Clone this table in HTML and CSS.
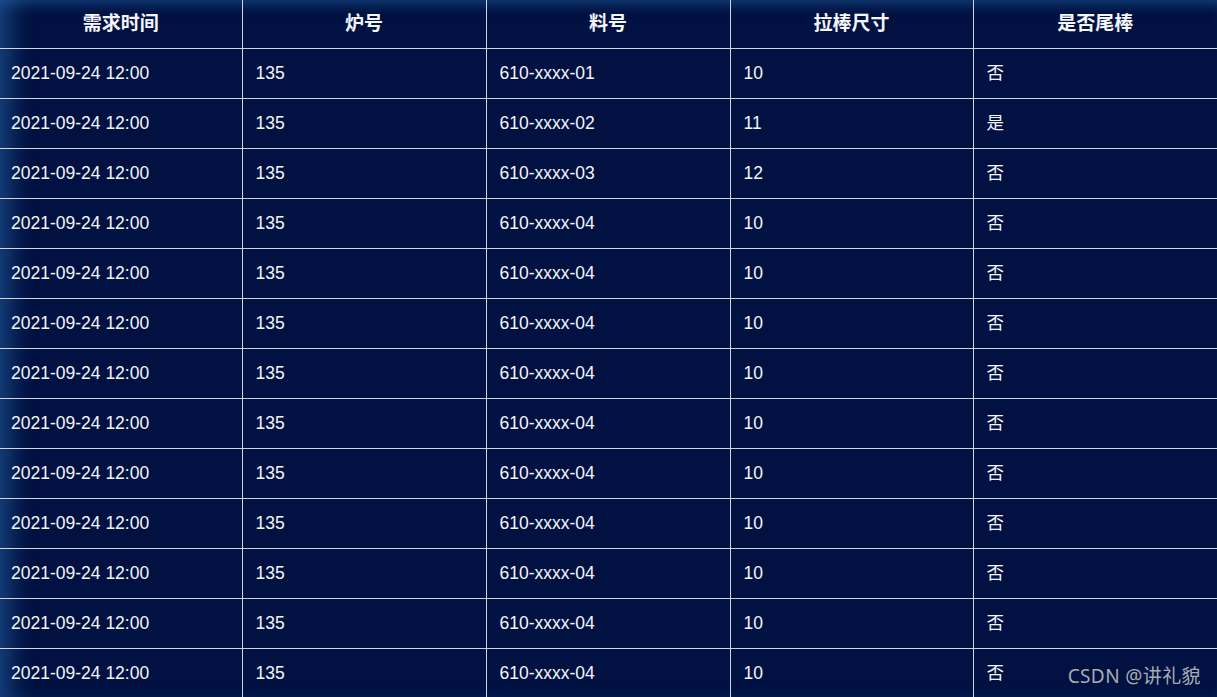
FILE: index.html
```html
<!DOCTYPE html>
<html lang="zh">
<head>
<meta charset="utf-8">
<link rel="stylesheet" href="styles.css">
</head>
<body>
<div class="screen">
  <table class="grid">
    <colgroup>
      <col class="c1"><col class="c2"><col class="c3"><col class="c4"><col class="c5">
    </colgroup>
    <thead>
      <tr><th>需求时间</th><th>炉号</th><th>料号</th><th>拉棒尺寸</th><th>是否尾棒</th></tr>
    </thead>
    <tbody>
      <tr><td>2021-09-24 12:00</td><td>135</td><td>610-xxxx-01</td><td>10</td><td>否</td></tr>
      <tr><td>2021-09-24 12:00</td><td>135</td><td>610-xxxx-02</td><td>11</td><td>是</td></tr>
      <tr><td>2021-09-24 12:00</td><td>135</td><td>610-xxxx-03</td><td>12</td><td>否</td></tr>
      <tr><td>2021-09-24 12:00</td><td>135</td><td>610-xxxx-04</td><td>10</td><td>否</td></tr>
      <tr><td>2021-09-24 12:00</td><td>135</td><td>610-xxxx-04</td><td>10</td><td>否</td></tr>
      <tr><td>2021-09-24 12:00</td><td>135</td><td>610-xxxx-04</td><td>10</td><td>否</td></tr>
      <tr><td>2021-09-24 12:00</td><td>135</td><td>610-xxxx-04</td><td>10</td><td>否</td></tr>
      <tr><td>2021-09-24 12:00</td><td>135</td><td>610-xxxx-04</td><td>10</td><td>否</td></tr>
      <tr><td>2021-09-24 12:00</td><td>135</td><td>610-xxxx-04</td><td>10</td><td>否</td></tr>
      <tr><td>2021-09-24 12:00</td><td>135</td><td>610-xxxx-04</td><td>10</td><td>否</td></tr>
      <tr><td>2021-09-24 12:00</td><td>135</td><td>610-xxxx-04</td><td>10</td><td>否</td></tr>
      <tr><td>2021-09-24 12:00</td><td>135</td><td>610-xxxx-04</td><td>10</td><td>否</td></tr>
      <tr><td>2021-09-24 12:00</td><td>135</td><td>610-xxxx-04</td><td>10</td><td>否</td></tr>
    </tbody>
  </table>
  <div class="watermark">CSDN @讲礼貌</div>
</div>
</body>
</html>
```

FILE: styles.css
```css
html, body {
  margin: 0;
  padding: 0;
  background: #001040;
}
.screen {
  position: relative;
  width: 1217px;
  height: 697px;
  overflow: hidden;
  background: #011141;
  box-shadow: inset 22px 0 22px -10px rgba(40, 110, 180, 0.5), inset 0 12px 14px -8px rgba(40, 110, 180, 0.45);
}
.grid {
  width: 1217px;
  border-collapse: collapse;
  table-layout: fixed;
  font-family: "Liberation Sans", Arial, "Noto Sans CJK SC", sans-serif;
  color: #f4f6fa;
}
.c1 { width: 242px; }
.c2 { width: 244px; }
.c3 { width: 244px; }
.c4 { width: 243px; }
.grid th {
  height: 48px;
  padding: 0 0 4px 0;
  font-size: 19px;
  font-weight: bold;
  text-align: center;
  border-right: 1px solid #d0d4dc;
  border-bottom: 1px solid #d0d4dc;
  box-sizing: border-box;
}
.grid td {
  height: 49px;
  padding: 0 0 0 13px;
  font-size: 17.5px;
  line-height: 20px;
  text-align: left;
  border-right: 1px solid #d0d4dc;
  border-bottom: 1px solid #d0d4dc;
  white-space: nowrap;
}
.grid td:first-child {
  padding-left: 11px;
}
.grid th:last-child,
.grid td:last-child {
  border-right: none;
}
.watermark {
  position: absolute;
  right: 16px;
  bottom: 8px;
  font-family: "Noto Sans", "Noto Sans CJK SC", sans-serif;
  font-size: 19px;
  color: #a8acb4;
  letter-spacing: 0.4px;
}
```
